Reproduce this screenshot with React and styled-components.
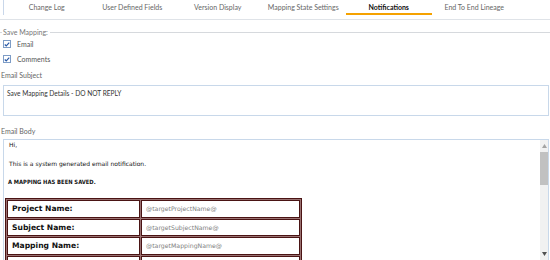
import React from "react";
import styled, { createGlobalStyle } from "styled-components";

const GlobalStyle = createGlobalStyle`
  html, body { margin: 0; padding: 0; background: #fff; }
  body { font-family: Lato, "Open Sans", sans-serif; }
  * { box-sizing: border-box; }
`;

const Page = styled.div`
  width: 550px;
  height: 260px;
  overflow: hidden;
  background: #fff;
`;

const TabBar = styled.div`
  display: flex;
  height: 20px;
  padding-left: 3px;
  border-bottom: 1px solid #dfe3e8;
`;

const TabList = styled.div`
  display: flex;
  height: 15px;
  border-left: 1px solid #c9d7ea;
`;

const Tab = styled.div`
  width: 85.5px;
  height: 15px;
  display: flex;
  align-items: center;
  justify-content: center;
  font-size: 7px;
  color: ${(p) => (p.$active ? "#111" : "#666")};
  font-weight: ${(p) => (p.$active ? 700 : 400)};
  border-bottom: 2px solid ${(p) => (p.$active ? "#f5a200" : "transparent")};
  white-space: nowrap;
`;

const Fieldset = styled.fieldset`
  margin: 8px 0 0 0;
  padding: 3px 0 0 3px;
  border: none;
  border-top: 1px solid #d6d9dd;
  display: flex;
  flex-direction: column;
  gap: 5px;
`;

const Legend = styled.legend`
  font-size: 7px;
  color: #777;
  padding: 0 2px 0 1px;
  margin-left: -1px;
`;

const CheckRow = styled.label`
  display: flex;
  align-items: center;
  gap: 6px;
  height: 10px;
  font-size: 7px;
  color: #555;
`;

const Box = styled.span`
  width: 8px;
  height: 8px;
  border: 1px solid #7d9cc6;
  background: #fff;
  display: flex;
  align-items: center;
  justify-content: center;
`;

const Label = styled.div`
  font-size: 7px;
  color: #666;
  padding-left: 1px;
  margin-top: ${(p) => p.$top}px;
`;

const Field = styled.div`
  margin: ${(p) => p.$gap}px 1px 0 3px;
  height: ${(p) => p.$h}px;
  border: 1px solid #c8d8ea;
  font-size: 6.6px;
  color: #333;
  padding: 3px 3px;
`;

const BodyField = styled.div`
  margin: 4px 1px 0 3px;
  height: 122px;
  border: 1px solid #c8d8ea;
  display: flex;
  overflow: hidden;
`;

const BodyContent = styled.div`
  flex: 1;
  padding: 0 1px;
  font-family: "DejaVu Sans", Verdana, sans-serif;
  font-size: 6px;
  color: #111;
`;

const Para = styled.p`
  margin: 0 0 ${(p) => p.$mb}px 0;
  padding-left: ${(p) => (p.$bold ? 3 : 4)}px;
  height: 9px;
  line-height: 9px;
  font-weight: ${(p) => (p.$bold ? 700 : 400)};
  font-size: ${(p) => (p.$bold ? 5.8 : 6)}px;
  font-family: ${(p) =>
    p.$bold ? '"DejaVu Sans Condensed", "Liberation Sans", sans-serif' : "inherit"};
  font-stretch: ${(p) => (p.$bold ? "condensed" : "normal")};
`;

const Table = styled.table`
  border-collapse: separate;
  border-spacing: 1px;
  border: 1px solid #4a1414;
  background: #9a7272;
  width: 297px;
`;

const Cell = styled.td`
  border: 1px solid #4a1414;
  background: #fff;
  height: 17.5px;
  padding: 0 4px;
  font-size: ${(p) => (p.$bold ? 7.6 : 6.2)}px;
  font-weight: ${(p) => (p.$bold ? 700 : 400)};
  font-family: "DejaVu Sans", sans-serif;
  color: ${(p) => (p.$bold ? "#111" : "#808080")};
  width: ${(p) => p.$w || "auto"};
  white-space: nowrap;
`;

const Scrollbar = styled.div`
  width: 8px;
  background: #f1f1f1;
  display: flex;
  flex-direction: column;
  align-items: center;
`;

const Arrow = styled.div`
  height: 12px;
  display: flex;
  align-items: center;
  justify-content: center;
`;

const Thumb = styled.div`
  width: 8px;
  height: 33px;
  background: #c1c1c1;
`;

const Spacer = styled.div`
  flex: 1;
`;

const Check = () => (
  <svg width="8" height="7" viewBox="0 0 8 7">
    <path d="M1 3.5 L3 5.5 L7 1" fill="none" stroke="#2a5aa8" strokeWidth="1.6" />
  </svg>
);

const Tri = ({ up }) => (
  <svg width="5" height="4" viewBox="0 0 5 4">
    <path d={up ? "M0 4 L2.5 0 L5 4 Z" : "M0 0 L5 0 L2.5 4 Z"} fill={up ? "#a3a3a3" : "#505050"} />
  </svg>
);

const tabs = ["Change Log", "User Defined Fields", "Version Display", "Mapping State Settings", "Notifications", "End To End Lineage"];

const rows = [
  ["Project Name:", "@targetProjectName@"],
  ["Subject Name:", "@targetSubjectName@"],
  ["Mapping Name:", "@targetMappingName@"],
  ["", ""],
];

export default function App() {
  return (
    <Page>
      <GlobalStyle />
      <TabBar>
        <TabList>
          {tabs.map((t) => (
            <Tab key={t} $active={t === "Notifications"}>{t}</Tab>
          ))}
        </TabList>
      </TabBar>

      <Fieldset>
        <Legend>Save Mapping:</Legend>
        <CheckRow><Box><Check /></Box>Email</CheckRow>
        <CheckRow><Box><Check /></Box>Comments</CheckRow>
      </Fieldset>

      <Label $top={7}>Email Subject</Label>
      <Field $h={31} $gap={6}>Save Mapping Details - DO NOT REPLY</Field>

      <Label $top={11}>Email Body</Label>
      <BodyField>
        <BodyContent>
          <Para $mb={10}>Hi,</Para>
          <Para $mb={10}>This is a system generated email notification.</Para>
          <Para $mb={11} $bold>A MAPPING HAS BEEN SAVED.</Para>
          <Table>
            <tbody>
              {rows.map((r, i) => (
                <tr key={i}>
                  <Cell $bold $w="133px">{r[0]}</Cell>
                  <Cell>{r[1]}</Cell>
                </tr>
              ))}
            </tbody>
          </Table>
        </BodyContent>
        <Scrollbar>
          <Arrow><Tri up /></Arrow>
          <Thumb />
          <Spacer />
          <Arrow><Tri /></Arrow>
        </Scrollbar>
      </BodyField>
    </Page>
  );
}
